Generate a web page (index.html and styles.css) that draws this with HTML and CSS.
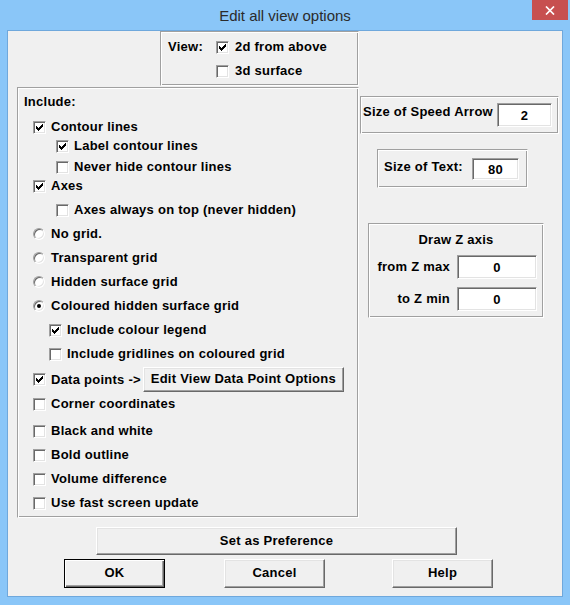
FILE: index.html
```html
<!DOCTYPE html>
<html>
<head>
<meta charset="utf-8">
<link rel="stylesheet" href="styles.css">
</head>
<body>
<div class="window">
  <div class="titlebar">
    <div class="title">Edit all view options</div>
    <div class="close">
      <svg width="10" height="9" viewBox="0 0 10 9"><path d="M1 0.5L9 8.5M9 0.5L1 8.5" stroke="#fff" stroke-width="1.7" fill="none"/></svg>
    </div>
  </div>
  <div class="client">
    <div class="main">
      <div class="leftcol">
        <div class="group view-group">
          <div class="view-label">View:</div>
          <div class="view-opts">
            <div class="row"><span class="cb"><svg width="13" height="13" viewBox="0 0 13 13"><path class="chk" d="M3 5h1v3h-1zM4 6h1v3h-1zM5 7h1v3h-1zM6 6h1v3h-1zM7 5h1v3h-1zM8 4h1v3h-1zM9 3h1v3h-1z"/></svg></span><span>2d from above</span></div>
            <div class="row"><span class="cb"></span><span>3d surface</span></div>
          </div>
        </div>
        <div class="group include-group">
          <div class="row inc-label">Include:</div>
          <div class="row l1 mt7"><span class="cb"><svg width="13" height="13" viewBox="0 0 13 13"><path class="chk" d="M3 5h1v3h-1zM4 6h1v3h-1zM5 7h1v3h-1zM6 6h1v3h-1zM7 5h1v3h-1zM8 4h1v3h-1zM9 3h1v3h-1z"/></svg></span><span>Contour lines</span></div>
          <div class="row l2 mt1"><span class="cb"><svg width="13" height="13" viewBox="0 0 13 13"><path class="chk" d="M3 5h1v3h-1zM4 6h1v3h-1zM5 7h1v3h-1zM6 6h1v3h-1zM7 5h1v3h-1zM8 4h1v3h-1zM9 3h1v3h-1z"/></svg></span><span>Label contour lines</span></div>
          <div class="row l2 mt3"><span class="cb"></span><span>Never hide contour lines</span></div>
          <div class="row l1 mt1"><span class="cb"><svg width="13" height="13" viewBox="0 0 13 13"><path class="chk" d="M3 5h1v3h-1zM4 6h1v3h-1zM5 7h1v3h-1zM6 6h1v3h-1zM7 5h1v3h-1zM8 4h1v3h-1zM9 3h1v3h-1z"/></svg></span><span>Axes</span></div>
          <div class="row l2 mt6"><span class="cb"></span><span>Axes always on top (never hidden)</span></div>
          <div class="row l1 mt6"><span class="radio"></span><span>No grid.</span></div>
          <div class="row l1 mt6"><span class="radio"></span><span>Transparent grid</span></div>
          <div class="row l1 mt6"><span class="radio"></span><span>Hidden surface grid</span></div>
          <div class="row l1 mt6"><span class="radio on"></span><span>Coloured hidden surface grid</span></div>
          <div class="row l3 mt6"><span class="cb"><svg width="13" height="13" viewBox="0 0 13 13"><path class="chk" d="M3 5h1v3h-1zM4 6h1v3h-1zM5 7h1v3h-1zM6 6h1v3h-1zM7 5h1v3h-1zM8 4h1v3h-1zM9 3h1v3h-1z"/></svg></span><span>Include colour legend</span></div>
          <div class="row l3 mt6"><span class="cb"></span><span>Include gridlines on coloured grid</span></div>
          <div class="row l1 mt4 data-row"><span class="cb"><svg width="13" height="13" viewBox="0 0 13 13"><path class="chk" d="M3 5h1v3h-1zM4 6h1v3h-1zM5 7h1v3h-1zM6 6h1v3h-1zM7 5h1v3h-1zM8 4h1v3h-1zM9 3h1v3h-1z"/></svg></span><span>Data points -&gt;</span><div class="btn data-btn">Edit View Data Point Options</div></div>
          <div class="row l1 mt3"><span class="cb"></span><span>Corner coordinates</span></div>
          <div class="row l1 mt9"><span class="cb"></span><span>Black and white</span></div>
          <div class="row l1 mt6"><span class="cb"></span><span>Bold outline</span></div>
          <div class="row l1 mt6"><span class="cb"></span><span>Volume difference</span></div>
          <div class="row l1 mt6"><span class="cb"></span><span>Use fast screen update</span></div>
        </div>
      </div>
      <div class="rightcol">
        <div class="group speed-group">
          <div class="speed-label">Size of Speed Arrow</div>
          <div class="field speed-field">2</div>
        </div>
        <div class="group text-group">
          <div class="text-label">Size of Text:</div>
          <div class="field text-field">80</div>
        </div>
        <div class="group z-group">
          <div class="z-title">Draw Z axis</div>
          <div class="z-grid">
            <div class="z-label">from Z max</div>
            <div class="field z-field">0</div>
            <div class="z-label">to Z min</div>
            <div class="field z-field">0</div>
          </div>
        </div>
      </div>
    </div>
    <div class="pref-row"><div class="btn pref">Set as Preference</div></div>
    <div class="btn-row">
      <div class="btn default push">OK</div>
      <div class="btn push cancel">Cancel</div>
      <div class="btn push help">Help</div>
    </div>
  </div>
</div>
</body>
</html>
```

FILE: styles.css
```css
html, body {
  margin: 0;
  padding: 0;
  background: #8ac6f8;
}
body {
  font-family: "Liberation Sans", Arial, sans-serif;
  font-size: 13px;
  font-weight: bold;
  letter-spacing: 0.25px;
  color: #000;
}
.window {
  width: 570px;
  height: 605px;
  background: #8ac6f8;
  display: flex;
  flex-direction: column;
}
.titlebar {
  height: 30px;
  display: flex;
  align-items: flex-start;
  flex: none;
}
.title {
  flex: 1;
  padding-left: 38px;
  padding-top: 1px;
  text-align: center;
  font-size: 15px;
  font-weight: normal;
  letter-spacing: 0;
  line-height: 30px;
  color: #2b2b2b;
}
.close {
  width: 36px;
  height: 20px;
  margin-right: 2px;
  background: #c75050;
  display: flex;
  align-items: center;
  justify-content: center;
}
.close svg { display: block; }
.client {
  margin: 0 7px;
  width: 554px;
  height: 565px;
  border: 1px solid #6fa8dc;
  background: #f0f0f0;
  flex: none;
}
.main {
  display: flex;
  height: 487px;
}
.leftcol {
  width: 351px;
  flex: none;
}
.rightcol {
  flex: 1;
  display: flex;
  flex-direction: column;
  align-items: flex-start;
}
.group {
  box-sizing: border-box;
  border: 1px solid;
  border-color: #a0a0a0 #ffffff #ffffff #a0a0a0;
  box-shadow: inset 1px 1px 0 #ffffff, inset -1px -1px 0 #a0a0a0;
}
.row {
  display: flex;
  align-items: center;
  height: 18px;
  line-height: 18px;
  white-space: nowrap;
}
.cb {
  width: 13px;
  height: 13px;
  box-sizing: border-box;
  flex: none;
  background: #fff;
  border: 1px solid;
  border-color: #a0a0a0 #ffffff #ffffff #a0a0a0;
  box-shadow: inset 1px 1px 0 #696969, inset -1px -1px 0 #e3e3e3;
  margin-right: 5px;
  position: relative;
}
.cb svg {
  position: absolute;
  left: -1px;
  top: -1px;
  display: block;
}
.chk { fill: #000; }
.radio {
  width: 12px;
  height: 12px;
  box-sizing: border-box;
  flex: none;
  border-radius: 50%;
  background: #fff;
  border: 1px solid;
  border-color: #a0a0a0 #ffffff #ffffff #a0a0a0;
  box-shadow: inset 1px 1px 0 #696969, inset -1px -1px 0 #e3e3e3;
  margin-right: 6px;
  display: flex;
  align-items: center;
  justify-content: center;
}
.radio.on::after {
  content: "";
  width: 4px;
  height: 4px;
  border-radius: 50%;
  background: #000;
}
.view-group {
  margin-left: 152px;
  width: 199px;
  height: 55px;
  display: flex;
  padding: 6px 0 0 7px;
}
.view-label {
  width: 48px;
  height: 18px;
  line-height: 18px;
}
.view-opts {
  display: flex;
  flex-direction: column;
  gap: 6px;
}
.view-opts .cb { margin-right: 6px; }
.include-group {
  margin-left: 9px;
  margin-top: 1px;
  width: 342px;
  height: 431px;
  padding: 5px 0 0 6px;
}
.l1 { margin-left: 9px; }
.l2 { margin-left: 32px; }
.l3 { margin-left: 25px; }
.mt1 { margin-top: 1px; }
.mt3 { margin-top: 3px; }
.mt4 { margin-top: 4px; }
.mt6 { margin-top: 6px; }
.mt7 { margin-top: 7px; }
.mt9 { margin-top: 9px; }
.data-row { height: 25px; }
.btn {
  box-sizing: border-box;
  background: #f0f0f0;
  border: 1px solid;
  border-color: #ffffff #696969 #696969 #ffffff;
  box-shadow: inset -1px -1px 0 #a0a0a0, inset 1px 1px 0 #e3e3e3;
  display: flex;
  align-items: center;
  justify-content: center;
  white-space: nowrap;
  padding-bottom: 2px;
}
.data-btn {
  margin-left: 2px;
  width: 201px;
  height: 25px;
}
.field {
  box-sizing: border-box;
  background: #fff;
  border: 1px solid;
  border-color: #a0a0a0 #ffffff #ffffff #a0a0a0;
  box-shadow: inset 1px 1px 0 #696969, inset -1px -1px 0 #e3e3e3;
  display: flex;
  align-items: center;
  justify-content: center;
}
.speed-group {
  margin-top: 65px;
  margin-left: 1px;
  width: 199px;
  height: 38px;
  display: flex;
  justify-content: space-between;
  align-items: flex-start;
  padding: 0 6px 0 2px;
}
.speed-label {
  margin-top: 7px;
  line-height: 16px;
  white-space: nowrap;
}
.speed-field {
  margin-top: 6px;
  width: 55px;
  height: 24px;
}
.text-group {
  margin-top: 15px;
  margin-left: 18px;
  width: 151px;
  height: 39px;
  display: flex;
  justify-content: space-between;
  align-items: flex-start;
  padding: 0 8px 0 6px;
}
.text-label {
  margin-top: 9px;
  line-height: 16px;
  white-space: nowrap;
}
.text-field {
  margin-top: 8px;
  width: 47px;
  height: 22px;
}
.z-group {
  margin-top: 35px;
  margin-left: 9px;
  width: 176px;
  height: 95px;
  padding: 8px 0 0 5px;
}
.z-title {
  text-align: center;
  line-height: 16px;
  padding-right: 5px;
}
.z-grid {
  margin-top: 7px;
  display: grid;
  grid-template-columns: 76px 80px;
  column-gap: 7px;
  row-gap: 8px;
}
.z-label {
  text-align: right;
  line-height: 16px;
  align-self: center;
  white-space: nowrap;
}
.z-field {
  height: 24px;
}
.pref-row {
  margin-top: 9px;
  padding-left: 88px;
}
.pref {
  width: 361px;
  height: 28px;
}
.btn-row {
  display: flex;
  margin-top: 4px;
  padding-left: 56px;
}
.push {
  width: 101px;
  height: 29px;
}
.default {
  border: 1px solid #000;
  box-shadow: inset 1px 1px 0 #ffffff, inset -1px -1px 0 #696969, inset -2px -2px 0 #a0a0a0;
}
.cancel { margin-left: 59px; }
.help { margin-left: 67px; }
```
